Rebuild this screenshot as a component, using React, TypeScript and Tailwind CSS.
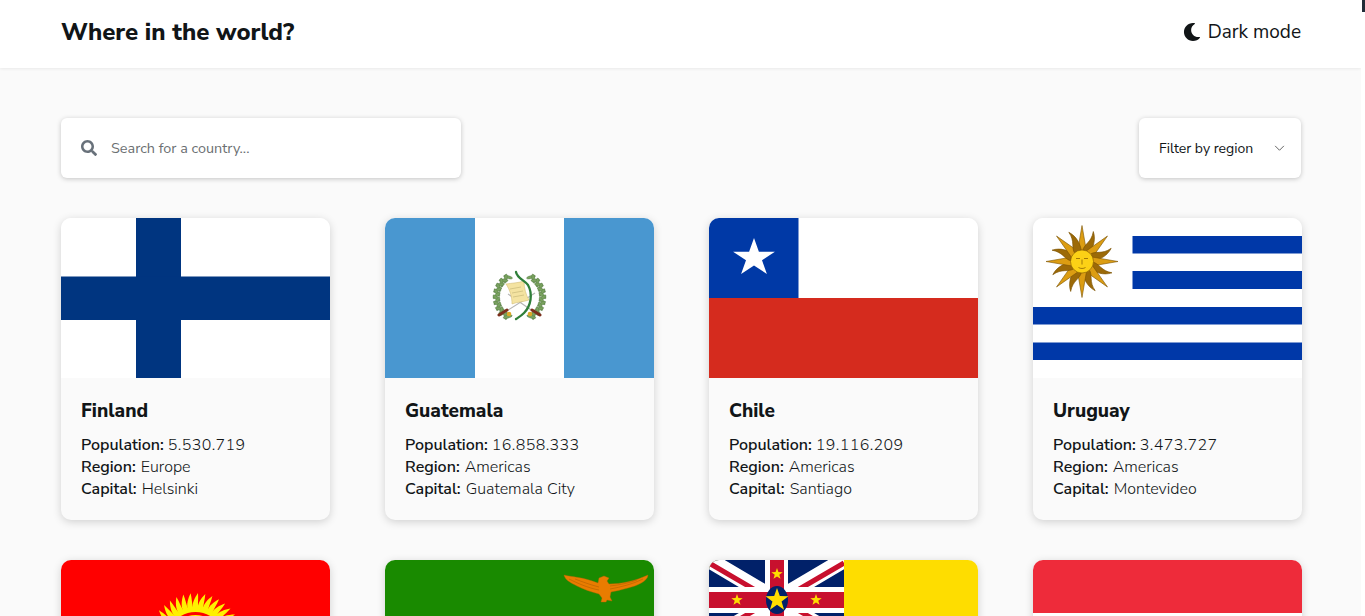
import React from "react";
import { FaSearch } from "react-icons/fa";

const FONT = "font-['Nunito_Sans','Noto_Sans','Open_Sans',sans-serif]";

function Finland() {
  return (
    <svg viewBox="0 0 269 160" className="block w-full h-full">
      <rect width="269" height="160" fill="#fff" />
      <rect x="75" width="45" height="160" fill="#003580" />
      <rect y="58.5" width="269" height="43.5" fill="#003580" />
    </svg>
  );
}

function Laurel({ side }: { side: 1 | -1 }) {
  const leaves = Array.from({ length: 18 }, (_, i) => {
    const deg = 30 + i * 7;
    const t = deg * (Math.PI / 180);
    const x = 134.5 + side * 23 * Math.sin(t);
    const y = 79 - 23 * Math.cos(t);
    const outer = i % 2 === 0 ? 1 : -1;
    const rot = side * (deg + outer * 45);
    return { x, y, rot, key: i };
  });
  return (
    <g>
      {leaves.map((l) => (
        <ellipse
          key={l.key}
          cx={l.x}
          cy={l.y}
          rx="1.5"
          ry="4.6"
          transform={`rotate(${l.rot} ${l.x} ${l.y})`}
          fill="#7aa35f"
          stroke="#4c7040"
          strokeWidth=".35"
        />
      ))}
    </g>
  );
}

function Guatemala() {
  return (
    <svg viewBox="0 0 269 160" className="block w-full h-full">
      <rect width="269" height="160" fill="#fff" />
      <rect width="90" height="160" fill="#4997D0" />
      <rect x="179" width="90" height="160" fill="#4997D0" />
      <Laurel side={-1} />
      <Laurel side={1} />
      <path d="M117 96L150 75M152 96L123 76" stroke="#b5b5b5" strokeWidth="1.1" fill="none" />
      <path d="M114 97l8-5M155 97l-8-5" stroke="#7b2f1c" strokeWidth="3" strokeLinecap="round" fill="none" />
      <path d="M121 66C127 65 133 65 139 63C139 70 141 77 144 82C138 84 132 84 127 86C127 79 125 72 121 66Z" fill="#f4e3a1" stroke="#cdb76d" strokeWidth=".5" />
      <path d="M125 71l11-2M127 75l11-2M128 79l11-2" stroke="#b7a86a" strokeWidth=".5" />
      <path d="M131 54C132 60 139 62 143 67C148 76 146 88 139 95C136 98 134 99 131 101" fill="none" stroke="#2f7f3a" strokeWidth="2.3" strokeLinecap="round" />
      <circle cx="124" cy="96" r="2.300" fill="#dba928" />
      <circle cx="145" cy="96" r="2.300" fill="#dba928" />
    </svg>
  );
}
function Chile() {
  return (
    <svg viewBox="0 0 269 160" className="block w-full h-full">
      <rect width="269" height="80" fill="#fff" />
      <rect y="80" width="269" height="80" fill="#D52B1E" />
      <rect width="89.500" height="80" fill="#0039A6" />
      <polygon points="45,20 49.9,33.75 65.9,33.75 53,42.25 57.9,56 45,47.5 32.1,56 37,42.25 24.1,33.75 40.1,33.75" fill="#fff" />
    </svg>
  );
}
function UruguaySun() {
  const cx = 49;
  const cy = 43.5;
  const angles = Array.from({ length: 16 }, (_, i) => i * 22.5);
  return (
    <g>
      {angles.map((a, i) => (
        <path
          key={a}
          transform={`rotate(${a} ${cx} ${cy})`}
          d={
            i % 2 === 0
              ? `M${cx - 4.500} ${cy - 10}L${cx} ${cy - 36}L${cx + 4.500} ${cy - 10}Z`
              : `M${cx - 3.500} ${cy - 10}C${cx - 5} ${cy - 17} ${cx + 1.500} ${cy - 21} ${cx - 1} ${cy - 32}C${cx + 5} ${cy - 25} ${cx + 5} ${cy - 16} ${cx + 3.500} ${cy - 10}Z`
          }
          fill={i % 2 === 0 ? "#dc9d12" : "#9c6a08"}
          stroke="#7c5300"
          strokeWidth=".6"
        />
      ))}
      <circle cx={cx} cy={cy} r="11.500" fill="#FCD116" stroke="#7c5300" strokeWidth=".6" />
      <g fill="none" stroke="#7C5300" strokeWidth=".7">
        <path d="M43 40.500h4M51 40.500h4M49 41.500v5M45.500 49.500c2 1.300 5 1.300 7 0" />
      </g>
    </g>
  );
}
function Uruguay() {
  return (
    <svg viewBox="0 0 269 160" className="block w-full h-full">
      <rect width="269" height="160" fill="#fff" />
      <rect x="99.500" y="18" width="170" height="17.500" fill="#0038A8" />
      <rect x="99.500" y="53" width="170" height="18" fill="#0038A8" />
      <rect y="89" width="269" height="17.500" fill="#0038A8" />
      <rect y="124.500" width="269" height="17.500" fill="#0038A8" />
      <UruguaySun />
    </svg>
  );
}
function Kyrgyzstan() {
  const cx = 134.5;
  const cy = 80;
  const angles = Array.from({ length: 40 }, (_, i) => i * 9);
  return (
    <svg viewBox="0 0 269 160" className="block w-full h-full">
      <rect width="269" height="160" fill="#f00" />
      {angles.map((a) => (
        <path
          key={a}
          transform={`rotate(${a} ${cx} ${cy})`}
          d={`M${cx - 2.800} ${cy - 31}C${cx - 3.500} ${cy - 37} ${cx - 1} ${cy - 42} ${cx + 2.500} ${cy - 47}C${cx + 3} ${cy - 41} ${cx + 2} ${cy - 36} ${cx + 2.800} ${cy - 31}Z`}
          fill="#FFF000"
        />
      ))}
      <circle cx={cx} cy={cy} r="32" fill="#FFF000" />
      <circle cx={cx} cy={cy} r="26.500" fill="#FFF000" stroke="#f00" strokeWidth="3" />
    </svg>
  );
}
function Zambia() {
  return (
    <svg viewBox="0 0 269 160" className="block w-full h-full">
      <rect width="269" height="160" fill="#198A00" />
      <path
        d="M179 15C187 17 198 17 213 23L214 18L219 16L224 18L222 21L224 24C236 24 250 21 263 15C263 21 252 26 243 28C236 30 231 31 226 32L225 37L227 41L222 40L221 42L216 42L217 38L214 34C206 32 198 29 192 26C186 23 180 20 179 15Z"
        fill="#E97C00"
        stroke="#b86200"
        strokeWidth=".4"
      />
      <path d="M184 19C192 23 203 28 214 30M190 19C198 22 206 25 214 27M258 19C248 24 236 27 225 29M252 20C244 23 234 25 225 26" fill="none" stroke="#a85a00" strokeWidth=".5" />
    </svg>
  );
}
function Star({ x, y, s, fill = "#FEDD00" }: { x: number; y: number; s: number; fill?: string }) {
  const pts = Array.from({ length: 10 }, (_, i) => {
    const r = i % 2 === 0 ? s : s * 0.4;
    const a = (i * Math.PI) / 5 - Math.PI / 2;
    return `${x + r * Math.cos(a)},${y + r * Math.sin(a)}`;
  }).join(" ");
  return <polygon points={pts} fill={fill} />;
}
function Niue() {
  return (
    <svg viewBox="0 0 269 160" className="block w-full h-full">
      <rect width="269" height="160" fill="#FEDD00" />
      <svg x="0" y="0" width="135" height="80" viewBox="0 0 135 80">
        <rect width="135" height="80" fill="#012169" />
        <path d="M0 0L135 80M135 0L0 80" stroke="#fff" strokeWidth="16" />
        <path d="M0 3L60 38M135 3L75 38M0 77L60 42M135 77L75 42" stroke="#C8102E" strokeWidth="5" />
        <rect x="56" width="23" height="80" fill="#fff" />
        <rect y="27" width="135" height="26" fill="#fff" />
        <rect x="61" width="14" height="80" fill="#C8102E" />
        <rect y="32" width="135" height="16" fill="#C8102E" />
        <ellipse cx="68" cy="40" rx="11" ry="14" fill="#012169" />
        <Star x={68} y={40} s={12} />
        <Star x={68} y={14} s={6} />
        <Star x={28} y={40} s={6} />
        <Star x={107} y={40} s={6} />
      </svg>
    </svg>
  );
}
function Indonesia() {
  return (
    <svg viewBox="0 0 269 160" className="block w-full h-full">
      <rect width="269" height="160" fill="#fff" />
      <rect width="269" height="53" fill="#EE2B3A" />
    </svg>
  );
}

type C = { name: string; pop: string; region: string; capital: string; Flag: () => React.ReactElement };
const countries: C[] = [
  { name: "Finland", pop: "5.530.719", region: "Europe", capital: "Helsinki", Flag: Finland },
  { name: "Guatemala", pop: "16.858.333", region: "Americas", capital: "Guatemala City", Flag: Guatemala },
  { name: "Chile", pop: "19.116.209", region: "Americas", capital: "Santiago", Flag: Chile },
  { name: "Uruguay", pop: "3.473.727", region: "Americas", capital: "Montevideo", Flag: Uruguay },
  { name: "Kyrgyzstan", pop: "6.591.600", region: "Asia", capital: "Bishkek", Flag: Kyrgyzstan },
  { name: "Zambia", pop: "18.383.956", region: "Africa", capital: "Lusaka", Flag: Zambia },
  { name: "Niue", pop: "1.470", region: "Oceania", capital: "Alofi", Flag: Niue },
  { name: "Indonesia", pop: "273.523.621", region: "Asia", capital: "Jakarta", Flag: Indonesia },
];

function Card({ c }: { c: C }) {
  const F = c.Flag;
  return (
    <article className="w-[269px] rounded-[10px] bg-[#fafafa] shadow-[0_2px_8px_rgba(0,0,0,0.17)]">
      <div className="h-[160px] overflow-hidden rounded-t-[10px]">
        <F />
      </div>
      <div className="px-5 pt-[21px] pb-[20px] text-[#111517]">
        <h2 className="mb-[11px] text-[19px] leading-[24px] font-extrabold">{c.name}</h2>
        <p className="text-[16px] leading-[22px] font-light">
          <b className="font-semibold">Population:</b> <span className="tracking-[0.4px]">{c.pop}</span>
        </p>
        <p className="text-[16px] leading-[22px] font-light">
          <b className="mr-px font-semibold">Region:</b> {c.region}
        </p>
        <p className="text-[16px] leading-[22px] font-light">
          <b className="mr-px font-semibold">Capital:</b> {c.capital}
        </p>
      </div>
    </article>
  );
}

export default function App() {
  return (
    <div className={`flex h-[616px] w-full overflow-hidden bg-white ${FONT}`}>
      <div className="min-w-0 flex-1 bg-[#fafafa]">
        <header className="flex h-[68px] items-center justify-between bg-white pr-[60px] pb-[5px] pl-[61px] shadow-[0_1px_3px_rgba(0,0,0,0.07)]">
          <h1 className="text-[24px] leading-[32px] font-extrabold text-[#111517]">Where in the world?</h1>
          <button className="flex items-center gap-[7px] text-[19px] leading-[26px] text-[#111517]">
            <svg viewBox="0 0 512 512" className="h-[18px] w-[18px]" fill="#111517">
              <path d="M283.200 512c79 0 151.100-35.900 198.900-94.800 7.100-8.700-.6-21.400-11.600-19.300-124.800 23.800-239.300-71.900-239.300-197.800 0-72.500 38.800-139.200 101.900-175.100 9.700-5.500 7.300-20.200-3.800-22.200A258.200 258.200 0 0 0 283.200 0c-141.300 0-256 114.500-256 256 0 141.300 114.500 256 256 256z" />
            </svg>
            Dark mode
          </button>
        </header>
        <main className="pt-[50px] pr-[59px] pl-[61px]">
          <div className="flex items-center justify-between">
            <label className="flex h-[60px] w-[400px] items-center gap-[14px] rounded-[6px] bg-white pl-5 shadow-[0_1px_5px_rgba(0,0,0,0.22)]">
              <FaSearch className="h-4 w-4 text-[#68717a]" />
              <span className="pt-[1px] text-[14.4px] text-[#6b6f72]">Search for a country...</span>
            </label>
            <div className="mr-px flex h-[60px] w-[162px] items-center justify-between rounded-[6px] bg-white pr-[16px] pl-5 shadow-[0_1px_5px_rgba(0,0,0,0.22)]">
              <span className="pt-[1px] text-[14px] text-[#111517]">Filter by region</span>
              <svg viewBox="0 0 12 8" className="h-[7px] w-[11px]" fill="none" stroke="#222" strokeWidth="0.8">
                <path d="M1 1l5 5 5-5" />
              </svg>
            </div>
          </div>
          <div className="mt-[40px] grid grid-cols-[269px_269px_269px_269px] justify-between gap-y-[40px]">
            {countries.map((c) => (
              <Card key={c.name} c={c} />
            ))}
          </div>
        </main>
      </div>
      <div className="w-1 bg-white">
        <div className="ml-px h-3 w-[3px] bg-[#202c37]" />
      </div>
    </div>
  );
}
